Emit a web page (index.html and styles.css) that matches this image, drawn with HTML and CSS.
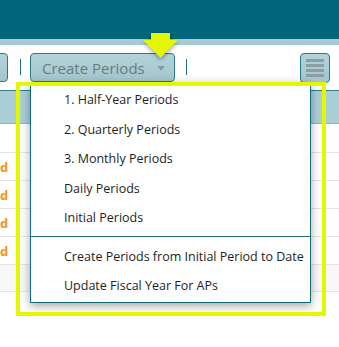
FILE: index.html
```html
<!DOCTYPE html>
<html lang="en">

<head>
	<meta charset="UTF-8">
	<meta name="viewport" content="width=device-width, initial-scale=1.0">
	<title>Create Periods</title>
	<link rel="stylesheet" href="styles.css">
</head>

<body>

	<div class="topbar"></div>
	<div class="strip"></div>

	<div class="toolbar">
		<div class="btn btn-edge"></div>
		<div class="sep"></div>
		<div class="btn btn-create">
			<span>Create Periods</span>
			<span class="caret"></span>
		</div>
		<div class="sep sep-2"></div>
		<div class="btn btn-menu">
			<span class="bar"></span>
			<span class="bar"></span>
			<span class="bar"></span>
			<span class="bar"></span>
		</div>
	</div>

	<div class="grid">
		<div class="grid-head"></div>
		<div class="grid-row first"></div>
		<div class="grid-row"><div class="cell">d</div></div>
		<div class="grid-row"><div class="cell">d</div></div>
		<div class="grid-row"><div class="cell">d</div></div>
		<div class="grid-row"><div class="cell">d</div></div>
		<div class="grid-row alt"></div>
	</div>

	<!-- dropdown opened from the Create Periods button -->
	<ul class="dropdown">
		<li>1. Half-Year Periods</li>
		<li>2. Quarterly Periods</li>
		<li>3. Monthly Periods</li>
		<li>Daily Periods</li>
		<li>Initial Periods</li>
		<li class="divider"></li>
		<li>Create Periods from Initial Period to Date</li>
		<li>Update Fiscal Year For APs</li>
	</ul>

	<!-- highlight annotations -->
	<div class="highlight"></div>
	<svg class="pointer" width="40" height="34" viewBox="0 0 40 34">
		<polygon points="10,3 29,3 29,10 37,10 19.5,28 2,10 10,10" fill="#e4f600" />
	</svg>

</body>

</html>
```

FILE: styles.css
```css
body {
	margin: 0;
	width: 339px;
	height: 347px;
	overflow: hidden;
	position: relative;
	background: #fff;
	font-family: "Open Sans", "Noto Sans", sans-serif;
}

.topbar {
	height: 39px;
	background-color: #00667b;
}

.strip {
	height: 6px;
	background-color: #a8cbd3;
}

.toolbar {
	display: flex;
	align-items: flex-start;
	height: 37px;
	padding-top: 8px;
}

.btn {
	box-sizing: border-box;
	height: 29px;
	border: 1px solid #2b7a8a;
	border-radius: 4px;
	background: linear-gradient(#b3d3da, #a2c6ce);
}

.btn-edge {
	width: 22px;
	margin-left: -14px;
}

.sep {
	width: 1px;
	height: 16px;
	margin-top: 6px;
	margin-left: 12px;
	background-color: #1f6f80;
}

.btn-create {
	display: flex;
	align-items: center;
	width: 145px;
	margin-left: 9px;
	padding-left: 11px;
	font-size: 15px;
	color: #6c7a7e;
}

.caret {
	width: 0;
	height: 0;
	margin-left: 12px;
	margin-top: 2px;
	border-left: 4px solid transparent;
	border-right: 4px solid transparent;
	border-top: 5px solid #8a9ca1;
}

.sep-2 {
	margin-left: 11px;
}

.btn-menu {
	display: flex;
	flex-direction: column;
	align-items: center;
	justify-content: center;
	gap: 2px;
	width: 30px;
	height: 30px;
	margin-left: auto;
	margin-right: 9px;
}

.bar {
	width: 18px;
	height: 3px;
	background-color: #8d9fa4;
}

.grid-head {
	height: 32px;
	border-top: 1px solid #2f7d8d;
	border-bottom: 1px solid #8fb4bd;
	background-color: #abcfd7;
}

.grid-row {
	display: flex;
	align-items: center;
	height: 27px;
	border-bottom: 1px solid #e4e4e4;
}

.grid-row.first {
	height: 28px;
}

.grid-row.alt {
	height: 26px;
	background-color: #f8f8f8;
}

.cell {
	font-size: 13px;
	font-weight: bold;
	color: #f7931e;
}

.dropdown {
	position: absolute;
	left: 30px;
	top: 82px;
	box-sizing: border-box;
	width: 281px;
	margin: 0;
	padding: 2px 0 1px;
	list-style: none;
	background: #fff;
	border: 1px solid #0f6b7d;
	box-shadow: 0 3px 9px rgba(0, 0, 0, 0.35);
}

.dropdown li {
	height: 29.5px;
	line-height: 29.5px;
	padding-left: 33px;
	font-size: 12.5px;
	color: #1e1e1e;
	white-space: nowrap;
}

.dropdown li.divider {
	height: 1px;
	margin: 3px 0 5px;
	padding: 0;
	background-color: #1f6f80;
}

.highlight {
	position: absolute;
	left: 16px;
	top: 82px;
	width: 302px;
	height: 226px;
	border: 4px solid #e4f600;
}

.pointer {
	position: absolute;
	left: 141px;
	top: 30px;
	filter: drop-shadow(0 2px 2px rgba(0, 0, 0, 0.35));
}
```
